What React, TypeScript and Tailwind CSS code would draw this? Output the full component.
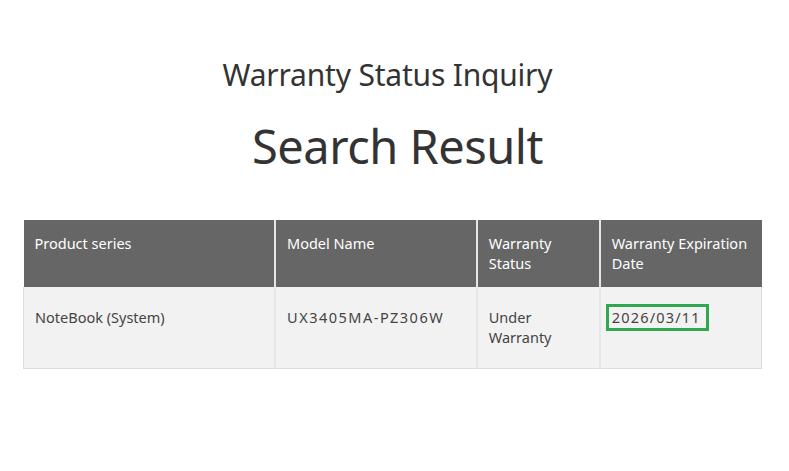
export default function App() {
  const font = { fontFamily: '"Noto Sans", "Open Sans", sans-serif' };

  return (
    <div className="w-[789px] h-[471px] bg-white text-[#333]" style={font}>
      <div className="pt-[55px] text-center">
        <h1 className="text-[30px] leading-[40px] tracking-[-0.2px] font-normal pr-[14px]">Warranty Status Inquiry</h1>
        <h2 className="mt-[18px] text-[47px] leading-[66px] tracking-[-0.5px] font-normal pl-[6px]">Search Result</h2>
      </div>

      <div className="mt-[41px] px-[23px]">
        <table className="w-[739px] border-collapse text-[14.5px] leading-[20px]">
          <thead>
            <tr className="bg-[#666666] text-white">
              <th className="w-[252px] h-[67px] pl-[11px] pr-2 pt-[13px] align-top text-left font-normal border-r-2 border-[#e6e6e6]">Product series</th>
              <th className="w-[202px] pl-[11px] pr-2 pt-[13px] align-top text-left font-normal border-r-2 border-[#e6e6e6]">Model Name</th>
              <th className="w-[123px] pl-[11px] pr-2 pt-[13px] align-top text-left font-normal border-r-2 border-[#e6e6e6]">Warranty Status</th>
              <th className="w-[162px] pl-[11px] pr-2 pt-[13px] align-top text-left font-normal">Warranty Expiration Date</th>
            </tr>
          </thead>
          <tbody>
            <tr className="bg-[#f2f2f2] text-[#444]">
              <td className="h-[81px] pl-[11px] pt-[20px] align-top border-l border-b border-[#dcdcdc] border-r-2 border-r-[#e6e6e6]">NoteBook (System)</td>
              <td className="pl-[11px] pt-[20px] align-top tracking-[1.5px] border-b border-[#dcdcdc] border-r-2 border-r-[#e6e6e6]">UX3405MA-PZ306W</td>
              <td className="pl-[11px] pt-[20px] align-top border-b border-[#dcdcdc] border-r-2 border-r-[#e6e6e6]">Under<br />Warranty</td>
              <td className="pl-[11px] pt-[20px] align-top border-b border-r border-[#dcdcdc]">
                <span className="relative inline-block tracking-[1.2px]">
                  2026/03/11
                  <span className="absolute left-[-6px] top-[-3px] w-[103px] h-[27px] border-[3px] border-[#2fa84f]" />
                </span>
              </td>
            </tr>
          </tbody>
        </table>
      </div>
    </div>
  );
}
